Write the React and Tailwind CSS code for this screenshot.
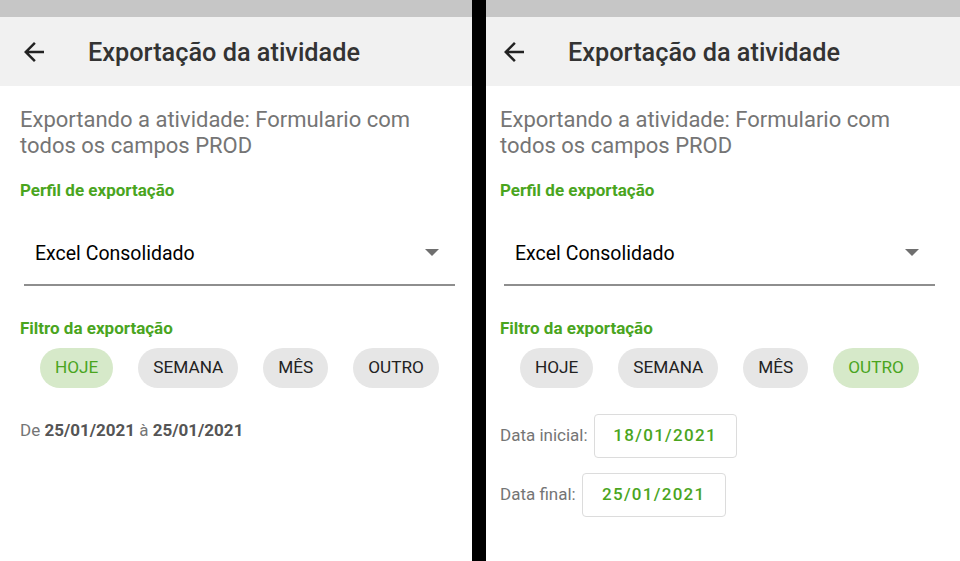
import React from "react";

const filters = ["HOJE", "SEMANA", "MÊS", "OUTRO"];

const BackArrow = () => (
  <svg width="30" height="30" viewBox="0 0 24 24" className="text-[#222]">
    <path
      fill="currentColor"
      d="M20 11H7.83l5.59-5.59L12 4l-8 8 8 8 1.41-1.41L7.83 13H20v-2z"
    />
  </svg>
);

const Chip = ({ label, active }) => (
  <div
    className={
      active
        ? "h-10 px-[15px] rounded-full flex items-center bg-[#d6e9c9] text-[#4aa51e] text-[17.2px]"
        : "h-10 px-[15px] rounded-full flex items-center bg-[#e6e6e6] text-[#222] text-[17.2px]"
    }
  >
    {label}
  </div>
);

const DateBox = ({ label, value, boxWidth }) => (
  <div className="flex items-center gap-[6px]">
    <span className="text-[17px] text-[#757575]">{label}</span>
    <div
      className={
        "h-[44px] border border-[#dcdcdc] rounded-[4px] flex items-center justify-center text-[17px] font-medium tracking-[1.3px] text-[#4aa51e] " +
        boxWidth
      }
    >
      {value}
    </div>
  </div>
);

const Screen = ({ selected }) => {
  return (
    <div className="w-[480px] h-[561px] bg-white flex flex-col font-['Roboto',sans-serif]">
      <div className="h-[17px] bg-[#c6c6c6]" />
      <div className="h-[69px] bg-[#f1f1f1] flex items-center">
        <div className="ml-[19px] flex items-center pt-[1px]">
          <BackArrow />
        </div>
        <h1 className="ml-[39px] pt-[2px] text-[25.3px] font-medium text-[#333]">
          Exportação da atividade
        </h1>
      </div>

      <div className="px-5 pt-[21px]">
        <p className="text-[22px] leading-[26px] text-[#757575] w-[430px]">
          Exportando a atividade: Formulario com todos os campos PROD
        </p>
        <p className="mt-[19px] text-[17px] font-bold text-[#4aa51e]">
          Perfil de exportação
        </p>

        <div className="ml-1 mr-[5px] mt-[30px] h-[52px] border-b-2 border-[#8e8e8e] flex items-center justify-between pl-[11px] pr-[16px]">
          <span className="text-[19.5px] text-black pb-[10px]">Excel Consolidado</span>
          <svg width="14" height="8" viewBox="0 0 14 8" className="mb-[12px]">
            <path d="M0 0h14L7 7z" fill="#6f6f6f" />
          </svg>
        </div>

        <p className="mt-[30px] text-[17px] font-bold text-[#4aa51e]">
          Filtro da exportação
        </p>

        <div className="mt-[7px] ml-5 flex gap-[25px]">
          {filters.map((f) => (
            <Chip key={f} label={f} active={f === selected} />
          ))}
        </div>

        {selected === "HOJE" ? (
          <p className="mt-[30px] text-[17px] text-[#757575]">
            De <b className="text-[#555]">25/01/2021</b> à{" "}
            <b className="text-[#555]">25/01/2021</b>
          </p>
        ) : (
          <div className="mt-[26px] flex flex-col gap-[15px]">
            <DateBox label="Data inicial:" value="18/01/2021" boxWidth="w-[143px]" />
            <DateBox label="Data final:" value="25/01/2021" boxWidth="w-[144px]" />
          </div>
        )}
      </div>
    </div>
  );
};

export default function App() {
  return (
    <div className="w-[960px] h-[561px] flex overflow-hidden bg-white">
      <div className="w-[472px] overflow-hidden">
        <Screen selected="HOJE" />
      </div>
      <div className="w-[14px] bg-black" />
      <div className="w-[474px] overflow-hidden">
        <div className="-ml-[6px]">
          <Screen selected="OUTRO" />
        </div>
      </div>
    </div>
  );
}
